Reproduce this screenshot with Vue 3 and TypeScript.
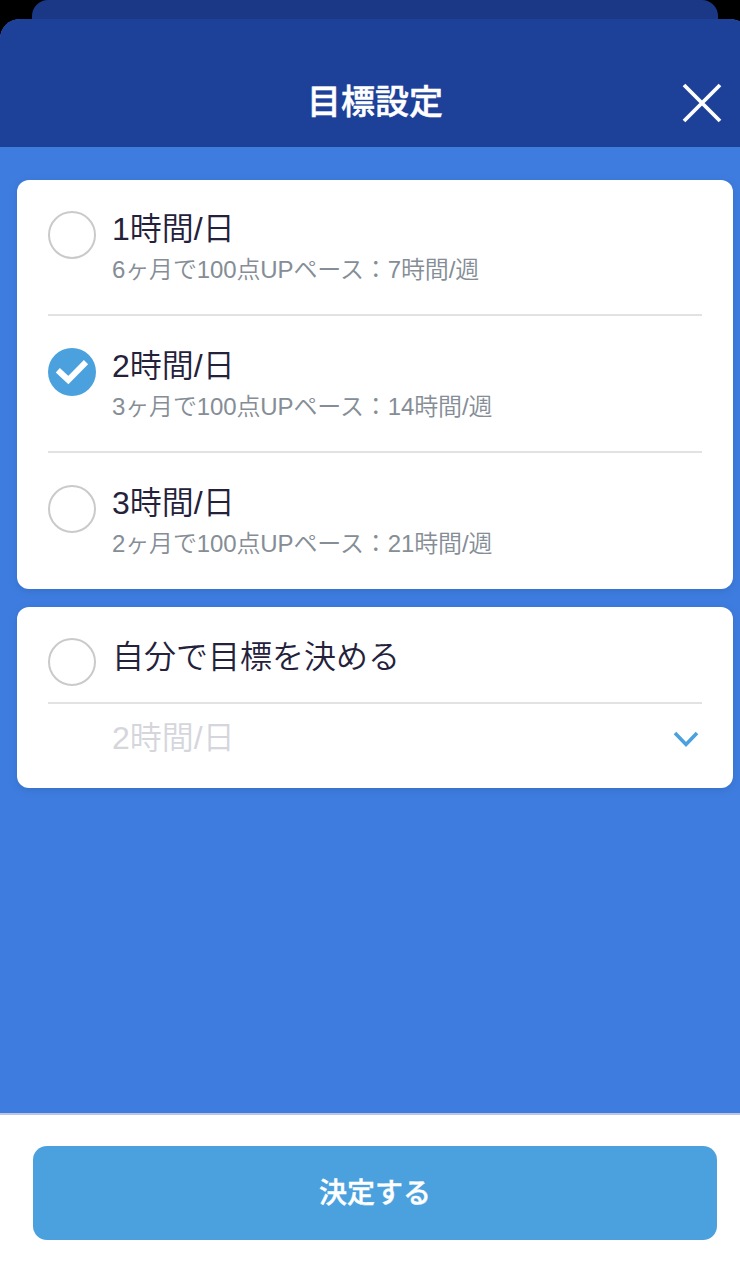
<script setup lang="ts">
import { ref } from 'vue'

interface Goal {
  id: string
  title: string
  note: string
}

const goals: Goal[] = [
  { id: 'one', title: '1時間/日', note: '6ヶ月で100点UPペース：7時間/週' },
  { id: 'two', title: '2時間/日', note: '3ヶ月で100点UPペース：14時間/週' },
  { id: 'three', title: '3時間/日', note: '2ヶ月で100点UPペース：21時間/週' },
]

const selected = ref<string>('two')
</script>

<template>
  <div class="screen">
    <div class="sheet-behind"></div>
    <div class="sheet">
      <header class="header">
        <h1 class="heading">目標設定</h1>
        <button class="close" aria-label="閉じる">
          <svg width="40" height="40" viewBox="0 0 40 40" fill="none" stroke="#fff" stroke-width="3.8">
            <path d="M2 2 38 38M38 2 2 38" />
          </svg>
        </button>
      </header>

      <main class="content">
        <section class="card">
          <div v-for="goal in goals" :key="goal.id" class="row" @click="selected = goal.id">
            <span class="radio" :class="{ checked: selected === goal.id }">
              <svg v-if="selected === goal.id" width="48" height="48" viewBox="0 0 48 48" fill="none" stroke="#fff" stroke-width="6">
                <path d="M9.8 22.3 20.3 32 38 14.2" />
              </svg>
            </span>
            <div class="texts">
              <div class="title">{{ goal.title }}</div>
              <div class="note">{{ goal.note }}</div>
            </div>
          </div>
        </section>

        <section class="card custom">
          <div class="row custom-row" @click="selected = 'custom'">
            <span class="radio" :class="{ checked: selected === 'custom' }">
              <svg v-if="selected === 'custom'" width="48" height="48" viewBox="0 0 48 48" fill="none" stroke="#fff" stroke-width="6">
                <path d="M9.8 22.3 20.3 32 38 14.2" />
              </svg>
            </span>
            <div class="title">自分で目標を決める</div>
          </div>
          <div class="picker">
            <span class="title muted">2時間/日</span>
            <svg class="chevron" width="26" height="18" viewBox="0 0 26 18" fill="none" stroke="#4aa1de" stroke-width="3.6">
              <path d="M2 3 13 14.5 24 3" />
            </svg>
          </div>
        </section>
      </main>

      <footer class="footer">
        <button class="submit">決定する</button>
      </footer>
    </div>
  </div>
</template>

<style>
html,
body {
  margin: 0;
  background: #000;
}
</style>

<style scoped>
.screen {
  width: 740px;
  height: 1273px;
  overflow: hidden;
  display: flex;
  flex-direction: column;
  background: #000;
  font-family: "Liberation Sans", "Noto Sans CJK JP", sans-serif;
}
.screen * {
  box-sizing: border-box;
}
.sheet-behind {
  flex: none;
  width: 686px;
  height: 40px;
  margin: 0 0 -21px 32px;
  border-radius: 16px 16px 0 0;
  background: #1a3886;
}
.sheet {
  position: relative;
  flex: 1;
  width: 750px;
  display: flex;
  flex-direction: column;
  border-radius: 20px 20px 0 0;
  overflow: hidden;
  background: #3e7ddf;
}
.header {
  flex: none;
  height: 128px;
  padding: 39px 28px 0 0;
  display: grid;
  grid-template-columns: 1fr auto;
  background: #1d4099;
}
.heading {
  margin: 0 -40px 0 28px;
  text-align: center;
  color: #fff;
  font-size: 34px;
  line-height: 88px;
  font-weight: 500;
  -webkit-text-stroke: 0.5px #fff;
}
.close {
  margin-top: 25px;
  width: 40px;
  height: 40px;
  padding: 0;
  border: 0;
  background: none;
}
.close svg,
.radio svg {
  display: block;
}
.content {
  flex: 1;
  padding: 33px 17px 0;
  display: flex;
  flex-direction: column;
  gap: 18px;
}
.card {
  padding: 0 31px;
  border-radius: 12px;
  background: #fff;
  box-shadow: 0 2px 8px rgba(20, 50, 110, 0.18);
}
.row {
  height: 137px;
  padding-top: 32px;
  display: flex;
  align-items: flex-start;
  gap: 16px;
  border-bottom: 2px solid #e2e2e3;
}
.row:first-child {
  height: 136px;
  padding-top: 31px;
}
.row:last-child {
  height: 136px;
  border-bottom: 0;
}
.radio {
  flex: none;
  width: 48px;
  height: 48px;
  border: 2px solid #cacacc;
  border-radius: 50%;
}
.radio.checked {
  border: 0;
  background: #4aa1de;
}
.title {
  color: #24213b;
  font-size: 32px;
  line-height: 36px;
  font-weight: 350;
  white-space: nowrap;
}
.note {
  margin-top: 9px;
  color: #858d96;
  font-size: 24px;
  line-height: 28px;
  font-weight: 350;
  letter-spacing: -0.13px;
  white-space: nowrap;
}
.custom {
  height: 181px;
}
.row.custom-row {
  height: 97px;
}
.custom-row .title {
  padding-top: 1px;
}
.picker {
  padding: 16px 3px 0 64px;
  display: flex;
  justify-content: space-between;
  align-items: flex-start;
}
.title.muted {
  color: #d5d6dc;
}
.chevron {
  margin-top: 10px;
}
.footer {
  flex: none;
  height: 160px;
  padding: 31px 33px 0;
  border-top: 2px solid #bdc5e0;
  background: #fff;
}
.submit {
  display: block;
  width: 100%;
  height: 94px;
  padding: 0 0 4px;
  border: 0;
  border-radius: 14px;
  background: #4aa1de;
  color: #fff;
  font-family: inherit;
  font-size: 28px;
  font-weight: 500;
  -webkit-text-stroke: 0.4px #fff;
}
</style>
